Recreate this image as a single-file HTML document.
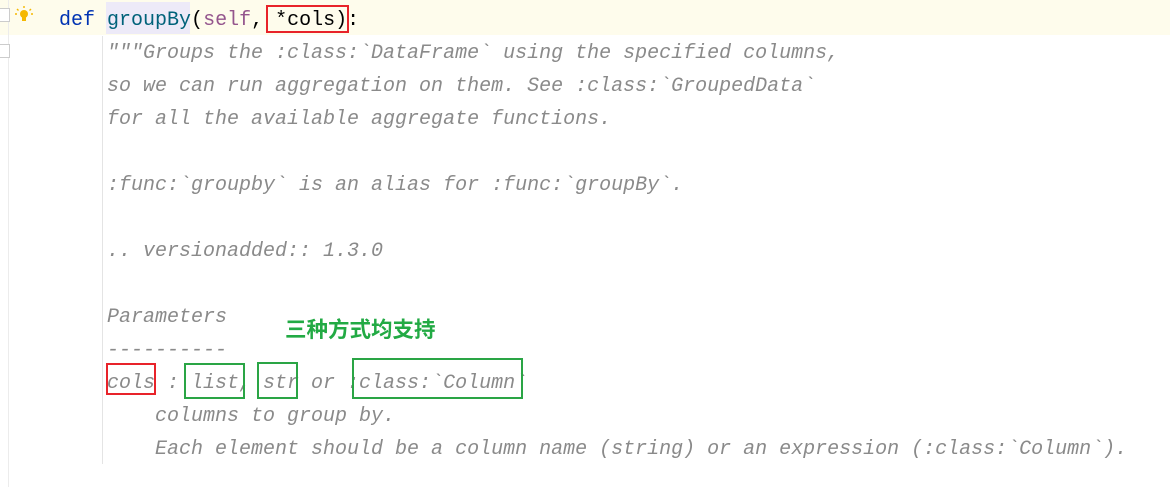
<!DOCTYPE html><html><head><style>
body{margin:0;width:1170px;height:487px;background:#fff;position:relative;overflow:hidden;font-family:"Liberation Mono",monospace;font-size:20px}
.l{position:absolute;left:59px;height:33px;line-height:33px;white-space:pre}
.d{color:#8a8a8a;font-style:italic}
.b{position:absolute;border:2px solid #e8232a;box-sizing:border-box}
.g{position:absolute;border:2px solid #2aa545;box-sizing:border-box}
</style></head><body>
<div style="position:absolute;left:0;top:0;width:1170px;height:35px;background:#fefcec"></div>
<div style="position:absolute;left:106px;top:2px;width:84px;height:32px;background:#edeaf8"></div>
<div style="position:absolute;left:0;top:0;width:8px;height:487px;border-right:1px solid #ececec"></div>
<div style="position:absolute;left:0;top:8px;width:9px;height:12px;border:1px solid #ccc;border-left:none;background:#fff"></div>
<div style="position:absolute;left:0;top:44px;width:9px;height:12px;border:1px solid #ccc;border-left:none;background:#fff"></div>
<div style="position:absolute;left:102px;top:36px;width:1px;height:428px;background:#e4e4e4"></div>
<svg style="position:absolute;left:15px;top:6px" width="18" height="18" viewBox="0 0 18 18"><circle cx="9" cy="8" r="4" fill="#f5b800"/><rect x="7" y="11" width="4" height="4" fill="#f5b800"/><path d="M9 0v2M2 3l1.5 1.5M16 3l-1.5 1.5M0 8h2M16 8h2" stroke="#f5b800" stroke-width="1.4"/></svg>
<div class="l" style="top:4px"><span style="color:#0033b3">def</span> <span style="color:#00627a">groupBy</span>(<span style="color:#94558d">self</span>, *cols):</div>
<div class="l d" style="top:37px">    """Groups the :class:`DataFrame` using the specified columns,</div>
<div class="l d" style="top:70px">    so we can run aggregation on them. See :class:`GroupedData`</div>
<div class="l d" style="top:103px">    for all the available aggregate functions.</div>
<div class="l d" style="top:169px">    :func:`groupby` is an alias for :func:`groupBy`.</div>
<div class="l d" style="top:235px">    .. versionadded:: 1.3.0</div>
<div class="l d" style="top:301px">    Parameters</div>
<div class="l d" style="top:334px">    ----------</div>
<div class="l d" style="top:367px">    cols : list, str or :class:`Column`</div>
<div class="l d" style="top:400px">        columns to group by.</div>
<div class="l d" style="top:433px">        Each element should be a column name (string) or an expression (:class:`Column`).</div>
<div class="b" style="left:266px;top:5px;width:83px;height:28px"></div>
<div class="b" style="left:106px;top:363px;width:50px;height:32px"></div>
<div class="g" style="left:184px;top:363px;width:61px;height:36px"></div>
<div class="g" style="left:257px;top:362px;width:41px;height:37px"></div>
<div class="g" style="left:352px;top:358px;width:171px;height:41px"></div>
<div style="position:absolute;left:285px;top:314px;font:bold 21.5px 'Noto Sans CJK SC',sans-serif;color:#22aa44;line-height:30px">三种方式均支持</div>
</body></html>
